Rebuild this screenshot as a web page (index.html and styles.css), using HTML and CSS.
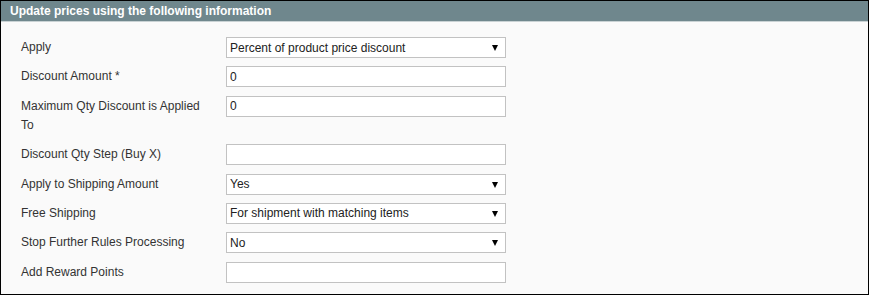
FILE: index.html
```html
<!DOCTYPE html>
<html lang="en">
<head>
    <meta charset="UTF-8">
    <title>Update prices</title>
    <link rel="stylesheet" href="styles.css">
</head>
<body>
    <div class="panel">
        <div class="panel-head">Update prices using the following information</div>

        <div class="form-grid">
            <label class="field-label">Apply</label>
            <div class="select-wrap">
                <select class="field-select">
                    <option>Percent of product price discount</option>
                </select>
            </div>

            <label class="field-label">Discount Amount <span class="req">*</span></label>
            <input class="field-input" type="text" value="0">

            <label class="field-label">Maximum Qty Discount is Applied To</label>
            <input class="field-input" type="text" value="0">

            <label class="field-label">Discount Qty Step (Buy X)</label>
            <input class="field-input" type="text" value="">

            <label class="field-label">Apply to Shipping Amount</label>
            <div class="select-wrap">
                <select class="field-select">
                    <option>Yes</option>
                </select>
            </div>

            <label class="field-label">Free Shipping</label>
            <div class="select-wrap">
                <select class="field-select">
                    <option>For shipment with matching items</option>
                </select>
            </div>

            <label class="field-label">Stop Further Rules Processing</label>
            <div class="select-wrap">
                <select class="field-select">
                    <option>No</option>
                </select>
            </div>

            <label class="field-label">Add Reward Points</label>
            <input class="field-input" type="text" value="">
        </div>
    </div>
</body>
</html>
```

FILE: styles.css
```css
body {
    margin: 0;
    background: #ffffff;
    font-family: "Liberation Sans", Arial, sans-serif;
}

.panel {
    width: 867px;
    height: 293px;
    border: 1px solid #000000;
    background: #fafafa;
}

.panel-head {
    height: 20px;
    line-height: 20px;
    padding-left: 9px;
    background: #6f878d;
    border-bottom: 1px solid #c9d2d4;
    color: #ffffff;
    font-size: 12px;
    font-weight: bold;
}

.form-grid {
    display: grid;
    grid-template-columns: 205px 280px;
    row-gap: 8.3px;
    padding: 15px 0 0 20px;
}

.field-label {
    font-size: 12px;
    line-height: 19.5px;
    color: #333333;
    padding: 1px 22px 0.5px 0;
}

.req {
    color: #333333;
}

.field-input,
.field-select {
    box-sizing: border-box;
    width: 280px;
    height: 21px;
    margin: 0;
    padding: 0 3px;
    border: 1px solid #c2c2c2;
    background: #ffffff;
    font-family: "Liberation Sans", Arial, sans-serif;
    font-size: 12px;
    color: #222222;
    outline: none;
}

.field-select {
    appearance: none;
    -webkit-appearance: none;
    border-radius: 0;
}

.select-wrap {
    position: relative;
    width: 280px;
    height: 21px;
}

.select-wrap::after {
    content: "";
    position: absolute;
    right: 8px;
    top: 8px;
    border-left: 3px solid transparent;
    border-right: 3px solid transparent;
    border-top: 6px solid #000000;
    pointer-events: none;
}
```
